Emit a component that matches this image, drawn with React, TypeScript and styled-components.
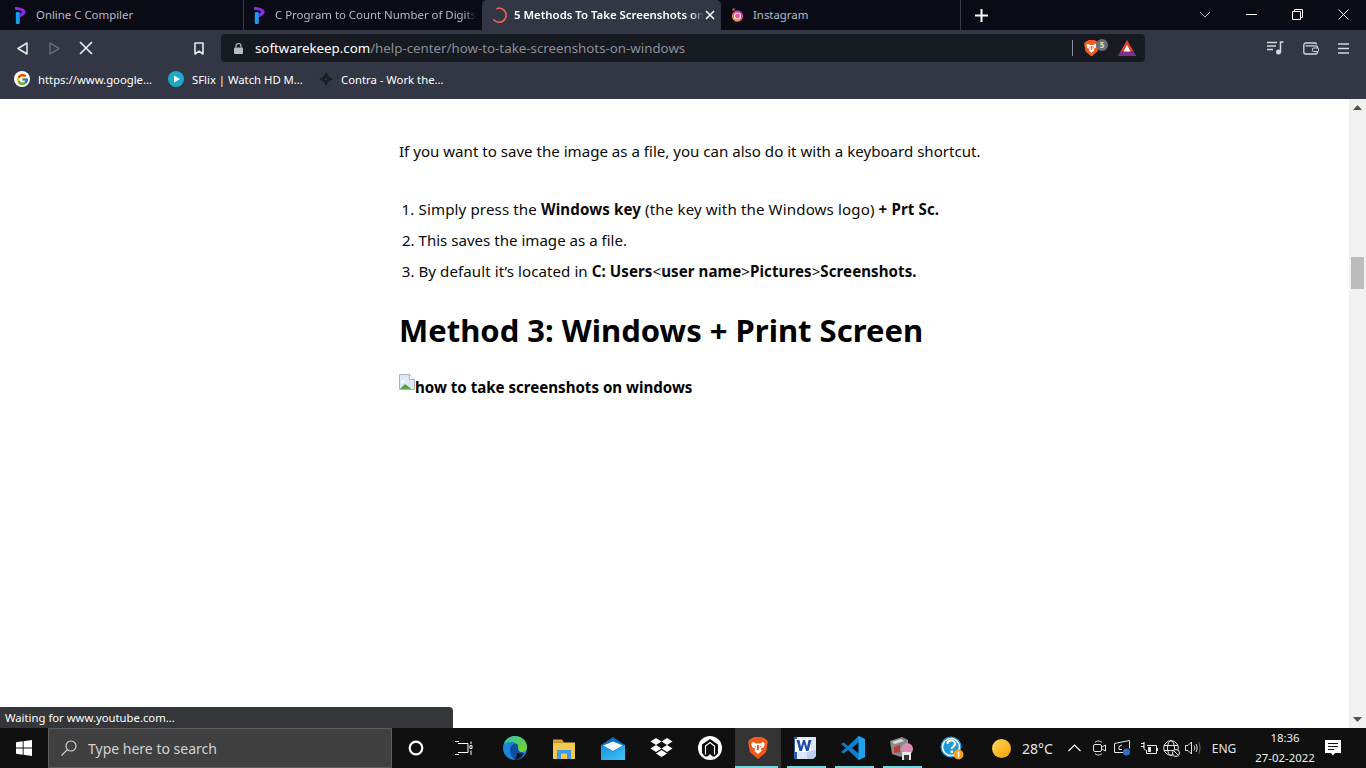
import { createGlobalStyle, styled } from 'styled-components';
import { FcGoogle } from 'react-icons/fc';

const GlobalStyle = createGlobalStyle`
  html, body {
    margin: 0;
    padding: 0;
    background: #fff;
    overflow: hidden;
  }
  * { box-sizing: border-box; }
`;

const font = `"Noto Sans", "Open Sans", Arial, sans-serif`;

const Screen = styled.div`
  width: 1366px;
  height: 768px;
  display: flex;
  flex-direction: column;
  overflow: hidden;
  font-family: ${font};
`;

/* tab strip */
const TabStrip = styled.div`
  height: 30px;
  flex: none;
  display: flex;
  background: #0b0b16;
`;
const Tab = styled.div<{ $active?: boolean; $w: number; $pad: number; $line?: boolean }>`
  width: ${(p) => p.$w}px;
  height: 30px;
  padding-left: ${(p) => p.$pad}px;
  padding-right: ${(p) => (p.$active ? 6 : 0)}px;
  display: flex;
  align-items: center;
  flex: none;
  background: ${(p) => (p.$active ? '#333644' : 'transparent')};
  border-radius: ${(p) => (p.$active ? '5px 5px 0 0' : '0')};
  border-right: ${(p) => (p.$line ? '1px solid #3a3b45' : '0')};
`;
const TabIcon = styled.span<{ $gap: number }>`
  display: flex;
  flex: none;
  margin-right: ${(p) => p.$gap}px;
`;
const TabClose = styled.span`
  display: flex;
  flex: none;
  margin-left: auto;
`;
const TabTitle = styled.span<{ $active?: boolean; $fade?: number }>`
  font-size: 11.4px;
  font-weight: ${(p) => (p.$active ? 600 : 400)};
  color: ${(p) => (p.$active ? '#fff' : '#b9bbc4')};
  white-space: nowrap;
  margin-bottom: 2px;
  ${(p) => (p.$fade ? `mask-image: linear-gradient(90deg, #000 calc(100% - ${p.$fade}px), transparent);` : '')}
`;
const NewTab = styled.div`
  width: 40px;
  display: flex;
  align-items: center;
  justify-content: center;
`;
const WindowControls = styled.div`
  margin-left: auto;
  display: flex;
  align-items: center;
  height: 30px;
`;
const WinButton = styled.div<{ $w: number }>`
  width: ${(p) => p.$w}px;
  display: flex;
  justify-content: center;
  margin-top: -2px;
`;

/* toolbar */
const Toolbar = styled.div`
  height: 36px;
  flex: none;
  display: flex;
  align-items: center;
  padding-left: 3px;
  background: #333644;
`;
const NavButton = styled.div<{ $w: number; $pl?: number }>`
  width: ${(p) => p.$w}px;
  padding-left: ${(p) => p.$pl ?? 0}px;
  flex: none;
  display: flex;
  justify-content: center;
  align-items: center;
`;
const UrlBox = styled.div`
  width: 924px;
  height: 28px;
  flex: none;
  display: flex;
  align-items: center;
  padding-left: 13px;
  background: #181a22;
  border-radius: 4px;
`;
const UrlText = styled.div`
  margin-left: 12px;
  font-size: 13.3px;
  color: #8b8e98;
  white-space: nowrap;
  b {
    font-weight: 400;
    color: #fff;
  }
`;
const UrlShields = styled.div`
  margin-left: auto;
  display: flex;
  align-items: center;
  padding-right: 9px;
`;
const UrlDivider = styled.div`
  width: 1px;
  height: 16px;
  background: #8b8e98;
  margin-right: 11px;
`;
const ShieldWrap = styled.div`
  position: relative;
  display: flex;
  width: 26px;
  margin-right: 8px;
`;
const ShieldBadge = styled.span`
  position: absolute;
  left: 12px;
  top: -1px;
  width: 12px;
  height: 12px;
  border-radius: 50%;
  background: #6b6d7a;
  color: #e9d9a0;
  font-size: 8px;
  font-weight: 700;
  line-height: 12px;
  text-align: center;
`;
const ToolbarRight = styled.div`
  display: flex;
  align-items: center;
  margin-left: 122px;
  gap: 19px;
`;

/* bookmarks */
const BookmarkBar = styled.div`
  height: 33px;
  flex: none;
  display: flex;
  align-items: center;
  padding-bottom: 7px;
  background: #333644;
`;
const Bookmark = styled.div<{ $w: number; $pad: number }>`
  width: ${(p) => p.$w}px;
  padding-left: ${(p) => p.$pad}px;
  flex: none;
  display: flex;
  align-items: center;
  gap: 8px;
  font-size: 11.3px;
  color: #fff;
  white-space: nowrap;
`;
const GoogleDot = styled.span`
  width: 16px;
  height: 16px;
  border-radius: 50%;
  background: #fff;
  display: flex;
  align-items: center;
  justify-content: center;
`;

/* page */
const Viewport = styled.div`
  position: relative;
  height: 629px;
  flex: none;
  display: flex;
  background: #fff;
`;
const Page = styled.main`
  flex: 1;
  padding: 40px 0 0 399px;
  color: #0a0a0a;
  font-size: 15.08px;
`;
const Para = styled.p`
  margin: 0 0 31px;
  line-height: 24px;
  height: 24px;
`;
const Steps = styled.ol`
  margin: 0;
  padding: 0 0 0 19.5px;
  b {
    font-weight: 700;
  }
`;
const Step = styled.li<{ $ls?: number }>`
  line-height: 31px;
  height: 31px;
  letter-spacing: ${(p) => p.$ls ?? 0}px;
`;
const Heading = styled.h2`
  margin: 22px 0 0;
  font-size: 31px;
  line-height: 42px;
  font-weight: 700;
  color: #000;
`;
const BrokenImage = styled.div`
  margin-top: 22px;
  display: flex;
  align-items: flex-end;
  height: 24px;
  font-weight: 700;
  color: #000;
  line-height: 20px;
  svg {
    align-self: flex-start;
    flex: none;
    margin-top: 1px;
  }
`;
const Scrollbar = styled.div`
  width: 17px;
  flex: none;
  background: #f1f1f1;
  display: flex;
  flex-direction: column;
  align-items: center;
`;
const ScrollArrow = styled.div<{ $bottom?: boolean }>`
  height: 17px;
  flex: none;
  margin-top: ${(p) => (p.$bottom ? 'auto' : '0')};
  display: flex;
  align-items: center;
  justify-content: center;
`;
const ScrollThumb = styled.div`
  width: 13px;
  height: 32px;
  margin-top: 141px;
  background: #bcbcbc;
`;
const StatusBubble = styled.div`
  position: absolute;
  left: 0;
  bottom: 0;
  width: 453px;
  height: 21px;
  padding-left: 5px;
  background: #35363a;
  color: #fff;
  font-size: 11.3px;
  line-height: 21px;
  border-radius: 0 4px 0 0;
`;

/* taskbar */
const Taskbar = styled.footer`
  height: 40px;
  flex: none;
  display: flex;
  align-items: center;
  background: #101010;
`;
const Slot = styled.div<{ $w?: number; $mark?: boolean; $active?: boolean; $ml?: number }>`
  position: relative;
  width: ${(p) => p.$w ?? 48}px;
  margin-left: ${(p) => p.$ml ?? 0}px;
  height: 40px;
  flex: none;
  display: flex;
  align-items: center;
  justify-content: center;
  background: ${(p) => (p.$active ? '#343434' : 'transparent')};
  &::after {
    content: '';
    display: ${(p) => (p.$mark ? 'block' : 'none')};
    position: absolute;
    left: ${(p) => (p.$active ? 0 : 6)}px;
    right: ${(p) => (p.$active ? 3 : 3)}px;
    bottom: 0;
    height: 2px;
    background: #76d6e0;
  }
`;
const SearchBox = styled.div`
  width: 344px;
  height: 40px;
  flex: none;
  display: flex;
  align-items: center;
  gap: 11px;
  padding-left: 12px;
  background: #404040;
  border: 1px solid #5e5e5e;
  color: #d2d2d2;
  font-size: 14px;
`;
const Weather = styled.div`
  display: flex;
  align-items: center;
  gap: 11px;
  margin-left: 16px;
  color: #e6e6e6;
  font-size: 14px;
`;
const Tray = styled.div`
  margin-left: auto;
  display: flex;
  align-items: center;
  height: 40px;
  padding-right: 17px;
  color: #e6e6e6;
`;
const TrayIcon = styled.div<{ $w?: number; $ml?: number }>`
  width: ${(p) => p.$w ?? 22}px;
  margin-left: ${(p) => p.$ml ?? 0}px;
  display: flex;
  justify-content: center;
`;
const Lang = styled.div`
  width: 40px;
  margin-right: 9px;
  text-align: center;
  font-size: 12px;
`;
const Clock = styled.div`
  width: 64px;
  text-align: center;
  font-size: 11.4px;
  line-height: 20px;
  color: #efefef;
`;

/* icons */
const PLogo = () => (
  <svg width="12" height="17" viewBox="0 0 12 17">
    <rect x=".8" y="5" width="4" height="12" rx="1" fill="#1a9cf2" />
    <path d="M0 0C4 0 9 1 10.500 4C11.500 7 7.500 9 4.800 10.500L4.800 6.800C6.500 6 7.500 5 6.500 4C5 3 2 3 0 3z" fill="#8a2be8" />
  </svg>
);
const Spinner = () => (
  <svg width="16" height="16" viewBox="0 0 16 16">
    <path d="M6 1.500A7 7 0 1 1 3 13" fill="none" stroke="#e8625c" strokeWidth="1.800" strokeLinecap="round" />
  </svg>
);
const TabCloseIcon = () => (
  <svg width="10" height="10" viewBox="0 0 10 10">
    <path d="M1 1l8 8M9 1l-8 8" stroke="#fff" strokeWidth="1.600" />
  </svg>
);
const InstaIcon = () => (
  <svg width="13" height="15" viewBox="0 0 13 15">
    <defs>
      <linearGradient id="ig" x1="0.2" y1="1" x2="0.8" y2="0">
        <stop offset="0" stopColor="#f9b233" />
        <stop offset="0.5" stopColor="#ea4d7a" />
        <stop offset="1" stopColor="#a534c8" />
      </linearGradient>
    </defs>
    <circle cx="2.500" cy="1.500" r="1.300" fill="#d8453e" />
    <circle cx="6.500" cy="8" r="5.700" fill="url(#ig)" />
    <circle cx="6.500" cy="8" r="3" fill="#ea5a8a" stroke="#fbe4ea" strokeWidth="1.200" />
  </svg>
);
const PlusIcon = () => (
  <svg width="13" height="13" viewBox="0 0 13 13">
    <path d="M6.500 0v13M0 6.500h13" stroke="#fff" strokeWidth="2" />
  </svg>
);
const ChevronDown = () => (
  <svg width="12" height="7" viewBox="0 0 12 7">
    <path d="M1 1l5 5 5-5" fill="none" stroke="#b9bbc4" />
  </svg>
);
const MinIcon = () => (
  <svg width="11" height="10" viewBox="0 0 11 10">
    <path d="M0 5.500h11" stroke="#fff" />
  </svg>
);
const RestoreIcon = () => (
  <svg width="11" height="11" viewBox="0 0 11 11">
    <path d="M.5 2.500h8v8h-8zM2.500 2.500v-2h8v8h-2" fill="none" stroke="#fff" />
  </svg>
);
const WinClose = () => (
  <svg width="11" height="11" viewBox="0 0 11 11">
    <path d="M.5.500l10 10M10.500.500l-10 10" stroke="#fff" />
  </svg>
);
const BackIcon = () => (
  <svg width="11" height="13" viewBox="0 0 11 13">
    <path d="M10 1v11L1 6.500z" fill="none" stroke="#e8e8ec" strokeWidth="1.500" strokeLinejoin="round" />
  </svg>
);
const ForwardIcon = () => (
  <svg width="11" height="13" viewBox="0 0 11 13">
    <path d="M1 1v11l9-5.500z" fill="none" stroke="#666976" strokeWidth="1.500" strokeLinejoin="round" />
  </svg>
);
const StopIcon = () => (
  <svg width="14" height="14" viewBox="0 0 14 14">
    <path d="M1 1l12 12M13 1L1 13" stroke="#ececf0" strokeWidth="1.700" />
  </svg>
);
const BookmarkIcon = () => (
  <svg width="10" height="13" viewBox="0 0 10 13">
    <path d="M1 1h8v11L5 9.200 1 12z" fill="none" stroke="#e8e8ec" strokeWidth="1.600" strokeLinejoin="round" />
  </svg>
);
const LockIcon = () => (
  <svg width="9" height="11" viewBox="0 0 9 11">
    <path d="M2 4.500V3a2.500 2.500 0 0 1 5 0v1.500" fill="none" stroke="#b9bbc4" strokeWidth="1.200" />
    <rect y="4.500" width="9" height="6.500" rx="1" fill="#b9bbc4" />
  </svg>
);
const BraveIcon = ({ size = 16 }: { size?: number }) => (
  <svg width={size} height={size * 1.100} viewBox="0 0 20 22">
    <path d="M3.500 1.500L6 0h8l2.500 1.500L19 3l.800 2-1.400 8.500c-.3 1.500-1 2.500-2.100 3.300L10 22l-6.300-5.200c-1.100-.8-1.800-1.800-2.100-3.300L.2 5 1 3z" fill="#f25a1d" />
    <path d="M5 5l3 1.500h4L15 5l2 2-1.500 3.500-2.500 1 .5 2.500L10 17l-3.500-3 .5-2.500-2.500-1L3 7z" fill="#fff" />
    <path d="M9 8h2v5H9zM6.500 8.500L8 9.500 7 10.500zM13.500 8.500L12 9.500 13 10.500z" fill="#f25a1d" />
  </svg>
);
const BatIcon = () => (
  <svg width="18" height="16" viewBox="0 0 18 16">
    <path d="M9 0l9 16H0z" fill="#e8432e" />
    <path d="M0 16l3-5h12l3 5z" fill="#7d2e8e" />
    <path d="M9 5l3.500 6.500h-7z" fill="#fff" />
  </svg>
);
const QueueIcon = () => (
  <svg width="17" height="14" viewBox="0 0 17 14">
    <path d="M0 1.500h10M0 5h9M0 8.500h6" stroke="#d8d8dc" strokeWidth="1.500" />
    <path d="M13.500 11V1H16.500" fill="none" stroke="#d8d8dc" strokeWidth="1.500" />
    <circle cx="11.500" cy="11" r="2.500" fill="#d8d8dc" />
  </svg>
);
const WalletIcon = () => (
  <svg width="16" height="13" viewBox="0 0 16 13">
    <path d="M.8 3.500C.8 2 1.500 1 3 1h9c1 0 1.500.5 1.500 1.500M.8 3.500V10c0 1.300.8 2 2 2h10c1 0 1.700-.7 1.700-1.700V5.500c0-1-.7-1.700-1.700-1.700H2.500" fill="none" stroke="#d8d8dc" strokeWidth="1.300" />
    <rect x="9.500" y="6" width="6" height="3.500" rx="1" fill="#333644" stroke="#d8d8dc" />
  </svg>
);
const MenuIcon = () => (
  <svg width="11" height="11" viewBox="0 0 11 11">
    <path d="M0 1h11M0 5.500h11M0 10h11" stroke="#d8d8dc" strokeWidth="1.700" />
  </svg>
);
const SFlixIcon = () => (
  <svg width="16" height="16" viewBox="0 0 16 16">
    <circle cx="8" cy="8" r="8" fill="#1ca9c9" />
    <path d="M6 4.500l6 3.500-6 3.500z" fill="#fff" />
  </svg>
);
const ContraIcon = () => (
  <svg width="14" height="14" viewBox="0 0 14 14">
    <path d="M7 0l2.500 4.500L14 7l-4.500 2.500L7 14l-2.500-4.500L0 7l4.500-2.500z" fill="#1b1c24" />
    <path d="M6 6h2v2H6z" fill="#333644" />
  </svg>
);
const BrokenImageIcon = () => (
  <svg width="16" height="16" viewBox="0 0 16 16">
    <path d="M.5.500h10l5 5v10H.500z" fill="#dfe8f8" stroke="#b3b3b3" />
    <path d="M10.500.500v5h5" fill="#fff" stroke="#b3b3b3" />
    <path d="M1 15l5-5 4 3 2 2z" fill="#5ba33f" />
    <path d="M2 8c1-2 3-2 4-1l-4 3z" fill="#fff" />
  </svg>
);
const ArrowUp = () => (
  <svg width="9" height="5" viewBox="0 0 9 5">
    <path d="M4.500 0L9 5H0z" fill="#505050" />
  </svg>
);
const ArrowDown = () => (
  <svg width="9" height="5" viewBox="0 0 9 5">
    <path d="M4.500 5L9 0H0z" fill="#505050" />
  </svg>
);
const WindowsIcon = () => (
  <svg width="16" height="16" viewBox="0 0 16 16">
    <path d="M0 2.300L6.700 1.300V7.600H0zM7.600 1.200L16 0V7.600H7.600zM0 8.400H6.700V14.700L0 13.700zM7.600 8.400H16V16L7.600 14.800z" fill="#fff" />
  </svg>
);
const SearchIcon = () => (
  <svg width="16" height="16" viewBox="0 0 16 16">
    <circle cx="10" cy="6" r="5" fill="none" stroke="#d8d8d8" strokeWidth="1.100" />
    <path d="M6.400 9.600L.5 15.500" stroke="#d8d8d8" strokeWidth="1.100" />
  </svg>
);
const CortanaIcon = () => (
  <svg width="16" height="16" viewBox="0 0 16 16">
    <circle cx="8" cy="8" r="6.300" fill="none" stroke="#fff" strokeWidth="2.200" />
  </svg>
);
const TaskViewIcon = () => (
  <svg width="18" height="15" viewBox="0 0 18 15">
    <path d="M3 2.500h10v9H3M0 .5h4M0 13.500h4" fill="none" stroke="#fff" strokeWidth="1" />
    <path d="M15 4.500h2v3h-2zM16 .5v2.500M16 9.500v4.500" fill="none" stroke="#fff" strokeWidth="1" />
  </svg>
);
const EdgeIcon = () => (
  <svg width="24" height="24" viewBox="0 0 24 24">
    <defs>
      <linearGradient id="edge" x1="0" y1="0" x2="1" y2="1">
        <stop offset="0" stopColor="#2fc4a5" />
        <stop offset="1" stopColor="#7ed321" />
      </linearGradient>
    </defs>
    <circle cx="12" cy="12" r="12" fill="#1a84d8" />
    <path d="M1 8C3 2 8 0 12 0c7 0 12 5 12 11 0 3-2 5-5 5-3 0-4-2-4-4 0-5-4-6-7-6S3 7 1 8z" fill="url(#edge)" />
    <path d="M7 14c0-4 3-7 7-6 1 1 1 2 1 4 0 3 2 5 5 4-2 5-5 8-8 8-3-2-5-6-5-10z" fill="#0b4f9e" />
    <path d="M14 17c2 1 5 1 7 0-1 3-5 7-9 7 1-2 2-4 2-7z" fill="#101010" />
  </svg>
);
const ExplorerIcon = () => (
  <svg width="22" height="21" viewBox="0 0 22 21">
    <path d="M0 1.500h9l2 3H0z" fill="#d9a428" />
    <path d="M0 4.500h22V21H0z" fill="#f4c94e" />
    <path d="M4 12h14v9H4z" fill="#3b9be8" />
    <path d="M8 15.500h6V21H8z" fill="#f4c94e" />
  </svg>
);
const MailIcon = () => (
  <svg width="24" height="23" viewBox="0 0 24 23">
    <defs>
      <linearGradient id="mail" x1="0" y1="0" x2="1" y2="1">
        <stop offset="0" stopColor="#1a8fe0" />
        <stop offset="1" stopColor="#3fc6f6" />
      </linearGradient>
    </defs>
    <path d="M0 8L12 0l12 8v15H0z" fill="#0a6fc4" />
    <path d="M2 8.500L12 4.500 22 8.500 12 14z" fill="#f2f6fa" />
    <path d="M0 8l12 6.500L24 8v15H0z" fill="url(#mail)" />
  </svg>
);
const DropboxIcon = () => (
  <svg width="23" height="20" viewBox="0 0 23 20">
    <path d="M6 0l5.500 3.500L6 7 .5 3.500zM17 0l5.500 3.500L17 7l-5.500-3.500zM.5 10.500L6 7l5.500 3.500L6 14zM17 7l5.500 3.500L17 14l-5.500-3.500zM6 15.500l5.500-3.500 5.500 3.500L11.500 19z" fill="#fff" />
  </svg>
);
const RingAppIcon = () => (
  <svg width="24" height="24" viewBox="0 0 24 24">
    <circle cx="12" cy="12" r="12" fill="#fff" />
    <path d="M12 3L20 8.500V17L17 20.500H14.500L12 18 9.500 20.500H7L4 17V8.500z" fill="#101010" />
    <path d="M7.500 18.500V10L12 6.500 16.500 10V18.500" fill="none" stroke="#fff" strokeWidth="1.100" />
  </svg>
);
const WordIcon = () => (
  <svg width="22" height="22" viewBox="0 0 22 22">
    <path d="M0 0h22v19l-3 3H0z" fill="#dbe7f7" />
    <path d="M0 0h3v22H0z" fill="#2f5dab" />
    <path d="M1 2h16v13H1z" fill="#fff" />
    <path d="M2.500 3h3l1.500 7 2-7h2l2 7 1.500-7h3l-3 11h-2.500L10 7l-2 7H5.500z" fill="#1d4fae" />
    <path d="M13 15l9-2v6l-3 3h-6z" fill="#b9d0ee" />
  </svg>
);
const VsCodeIcon = () => (
  <svg width="24" height="24" viewBox="0 0 24 24">
    <path d="M17.500 0L24 3v18l-6.500 3L7 14l-4.500 3.500L0 16l5-4-5-4 2.500-1.500L7 10z" fill="#0f7fcc" />
    <path d="M17.500 0L24 3v18l-6.500 3zM17.500 6.500L11 12l6.500 5.500z" fill="#20a0ee" />
    <path d="M17.500 6.500L11 12l6.500 5.500z" fill="#101010" />
  </svg>
);
const ToolsIcon = () => (
  <svg width="24" height="24" viewBox="0 0 24 24">
    <path d="M1 5l12-4 6 3v9l-7 8-9-3z" fill="#8a8a8a" />
    <path d="M3 6l9-3 3 2-9 3z" fill="#ddd" />
    <path d="M5 11l6-2v7l-6 1z" fill="#c23b3b" />
    <circle cx="18" cy="13" r="6" fill="#d98cb0" />
    <path d="M13 16h9v8h-9z" fill="#e8e8e8" />
    <path d="M15 19h5v5h-5z" fill="#333" />
  </svg>
);
const HelpIcon = () => (
  <svg width="24" height="24" viewBox="0 0 24 24">
    <circle cx="11" cy="11" r="10.500" fill="#1d9bd9" />
    <circle cx="11" cy="11" r="8.500" fill="none" stroke="#fff" strokeWidth="1.500" />
    <path d="M7.500 8c0-2 1.500-3.500 3.700-3.500S15 6 15 7.800c0 2.800-3.200 2.700-3.200 5" fill="none" stroke="#fff" strokeWidth="2.200" />
    <rect x="10.500" y="14.500" width="2.500" height="2.500" fill="#fff" />
    <circle cx="18.500" cy="18.500" r="5" fill="#f0a020" />
    <rect x="17.800" y="15.500" width="1.500" height="6" fill="#fff" />
  </svg>
);
const SunIcon = () => (
  <svg width="19" height="19" viewBox="0 0 19 19">
    <defs>
      <linearGradient id="sun" x1="0" y1="0" x2="1" y2="1">
        <stop offset="0" stopColor="#ffd75e" />
        <stop offset="1" stopColor="#f9a100" />
      </linearGradient>
    </defs>
    <circle cx="9.500" cy="9.500" r="9.500" fill="url(#sun)" />
  </svg>
);
const TrayChevron = () => (
  <svg width="13" height="8" viewBox="0 0 13 8">
    <path d="M.5 7l6-6 6 6" fill="none" stroke="#fff" strokeWidth="1.100" />
  </svg>
);
const MeetIcon = () => (
  <svg width="13" height="16" viewBox="0 0 13 16">
    <path d="M2 2.500C4 .5 7 .5 9 2.500M2 13.500c2 2 5 2 7 0" fill="none" stroke="#e6e6e6" />
    <rect x=".5" y="4.500" width="8" height="7" rx="1.500" fill="none" stroke="#e6e6e6" />
    <path d="M9 7l3.500-2v6L9 9" fill="none" stroke="#e6e6e6" />
  </svg>
);
const ScreenIcon = () => (
  <svg width="17" height="16" viewBox="0 0 17 16">
    <path d="M.5 3.500l15-3v8M11 12.500H.5v-9" fill="none" stroke="#e6e6e6" />
    <path d="M8 5L5 6.500V9.500H8" fill="none" stroke="#e6e6e6" />
    <circle cx="12.500" cy="12" r="3.500" fill="#2f6fc2" />
  </svg>
);
const BatteryIcon = () => (
  <svg width="17" height="13" viewBox="0 0 17 13">
    <path d="M0 1.500h3M0 4.500h3M3 0v6.500c0 1 .8 1.500 1.500 1.500" fill="none" stroke="#fff" />
    <path d="M6 3.500H15.500V11.500H5.500V8" fill="none" stroke="#e6e6e6" />
    <rect x="7" y="5" width="3" height="5" fill="#e6e6e6" />
    <path d="M16 6h1v3h-1z" fill="#e6e6e6" />
  </svg>
);
const GlobeIcon = () => (
  <svg width="17" height="17" viewBox="0 0 17 17">
    <circle cx="8" cy="8" r="7.300" fill="none" stroke="#e6e6e6" />
    <ellipse cx="8" cy="8" rx="3.500" ry="7.300" fill="none" stroke="#e6e6e6" />
    <path d="M1 5.500h14M1 10.500h14" stroke="#e6e6e6" />
    <circle cx="13" cy="13" r="3.500" fill="#101010" stroke="#e6e6e6" />
    <path d="M11 11l4 4" stroke="#e6e6e6" />
  </svg>
);
const VolumeIcon = () => (
  <svg width="16" height="14" viewBox="0 0 16 14">
    <path d="M.5 4.500h2.500L6.500 1v12L3 9.500H.5z" fill="none" stroke="#e6e6e6" />
    <path d="M9 4.500c1 1.500 1 3.500 0 5M11 3c1.500 2.500 1.500 5.500 0 8" fill="none" stroke="#e6e6e6" />
    <path d="M13.500 1c2 3.500 2 8.500 0 12" fill="none" stroke="#777" />
  </svg>
);
const NotifyIcon = () => (
  <svg width="16" height="16" viewBox="0 0 16 16">
    <path d="M0 0h16v13h-6l-2 2.500L6 13H0z" fill="#fff" />
    <path d="M3 3.500h10M3 6.500h10M3 9.500h6" stroke="#101010" />
  </svg>
);

function App() {
  return (
    <Screen>
      <GlobalStyle />
      <TabStrip>
        <Tab $w={244} $pad={15} $line>
          <TabIcon $gap={9}><PLogo /></TabIcon>
          <TabTitle>Online C Compiler</TabTitle>
        </Tab>
        <Tab $w={238} $pad={10}>
          <TabIcon $gap={9}><PLogo /></TabIcon>
          <TabTitle $fade={12}>C Program to Count Number of Digits</TabTitle>
        </Tab>
        <Tab $w={239} $pad={9} $active>
          <TabIcon $gap={7}><Spinner /></TabIcon>
          <TabTitle $active $fade={14}>5 Methods To Take Screenshots on</TabTitle>
          <TabClose><TabCloseIcon /></TabClose>
        </Tab>
        <Tab $w={240} $pad={10} $line>
          <TabIcon $gap={9}><InstaIcon /></TabIcon>
          <TabTitle>Instagram</TabTitle>
        </Tab>
        <NewTab><PlusIcon /></NewTab>
        <WindowControls>
          <WinButton $w={46}><ChevronDown /></WinButton>
          <WinButton $w={46}><MinIcon /></WinButton>
          <WinButton $w={46}><RestoreIcon /></WinButton>
          <WinButton $w={46}><WinClose /></WinButton>
        </WindowControls>
      </TabStrip>

      <Toolbar>
        <NavButton $w={38}><BackIcon /></NavButton>
        <NavButton $w={26}><ForwardIcon /></NavButton>
        <NavButton $w={38}><StopIcon /></NavButton>
        <NavButton $w={116} $pl={72}><BookmarkIcon /></NavButton>
        <UrlBox>
          <LockIcon />
          <UrlText><b>softwarekeep.com</b>/help-center/how-to-take-screenshots-on-windows</UrlText>
          <UrlShields>
            <UrlDivider />
            <ShieldWrap>
              <BraveIcon size={15} />
              <ShieldBadge>5</ShieldBadge>
            </ShieldWrap>
            <BatIcon />
          </UrlShields>
        </UrlBox>
        <ToolbarRight>
          <QueueIcon />
          <WalletIcon />
          <MenuIcon />
        </ToolbarRight>
      </Toolbar>

      <BookmarkBar>
        <Bookmark $w={154} $pad={14}>
          <GoogleDot><FcGoogle size={13} /></GoogleDot>
          https://www.google...
        </Bookmark>
        <Bookmark $w={150} $pad={14}>
          <SFlixIcon />
          SFlix | Watch HD M...
        </Bookmark>
        <Bookmark $w={160} $pad={15}>
          <ContraIcon />
          Contra - Work the...
        </Bookmark>
      </BookmarkBar>

      <Viewport>
        <Page>
          <Para>If you want to save the image as a file, you can also do it with a keyboard shortcut.</Para>
          <Steps>
            <Step $ls={0.13}>Simply press the <b>Windows key</b> (the key with the Windows logo) <b>+ Prt Sc.</b></Step>
            <Step>This saves the image as a file.</Step>
            <Step $ls={0.07}>By default it’s located in <b>C: Users</b>&lt;<b>user name</b>&gt;<b>Pictures</b>&gt;<b>Screenshots.</b></Step>
          </Steps>
          <Heading>Method 3: Windows + Print Screen</Heading>
          <BrokenImage>
            <BrokenImageIcon />
            how to take screenshots on windows
          </BrokenImage>
        </Page>
        <Scrollbar>
          <ScrollArrow><ArrowUp /></ScrollArrow>
          <ScrollThumb />
          <ScrollArrow $bottom><ArrowDown /></ScrollArrow>
        </Scrollbar>
        <StatusBubble>Waiting for www.youtube.com...</StatusBubble>
      </Viewport>

      <Taskbar>
        <Slot><WindowsIcon /></Slot>
        <SearchBox>
          <SearchIcon />
          Type here to search
        </SearchBox>
        <Slot><CortanaIcon /></Slot>
        <Slot><TaskViewIcon /></Slot>
        <Slot $ml={3}><EdgeIcon /></Slot>
        <Slot $ml={1}><ExplorerIcon /></Slot>
        <Slot $ml={1}><MailIcon /></Slot>
        <Slot><DropboxIcon /></Slot>
        <Slot $ml={1}><RingAppIcon /></Slot>
        <Slot $w={46} $ml={1} $active $mark><BraveIcon size={20} /></Slot>
        <Slot $mark><WordIcon /></Slot>
        <Slot $mark><VsCodeIcon /></Slot>
        <Slot $mark><ToolsIcon /></Slot>
        <Slot $ml={3}><HelpIcon /></Slot>
        <Weather>
          <SunIcon />
          28°C
        </Weather>
        <Tray>
          <TrayIcon><TrayChevron /></TrayIcon>
          <TrayIcon $ml={3}><MeetIcon /></TrayIcon>
          <TrayIcon $ml={1}><ScreenIcon /></TrayIcon>
          <TrayIcon $ml={5}><BatteryIcon /></TrayIcon>
          <TrayIcon><GlobeIcon /></TrayIcon>
          <TrayIcon><VolumeIcon /></TrayIcon>
          <Lang>ENG</Lang>
          <Clock>18:36<br />27-02-2022</Clock>
          <TrayIcon $w={32}><NotifyIcon /></TrayIcon>
        </Tray>
      </Taskbar>
    </Screen>
  );
}
export default App;
